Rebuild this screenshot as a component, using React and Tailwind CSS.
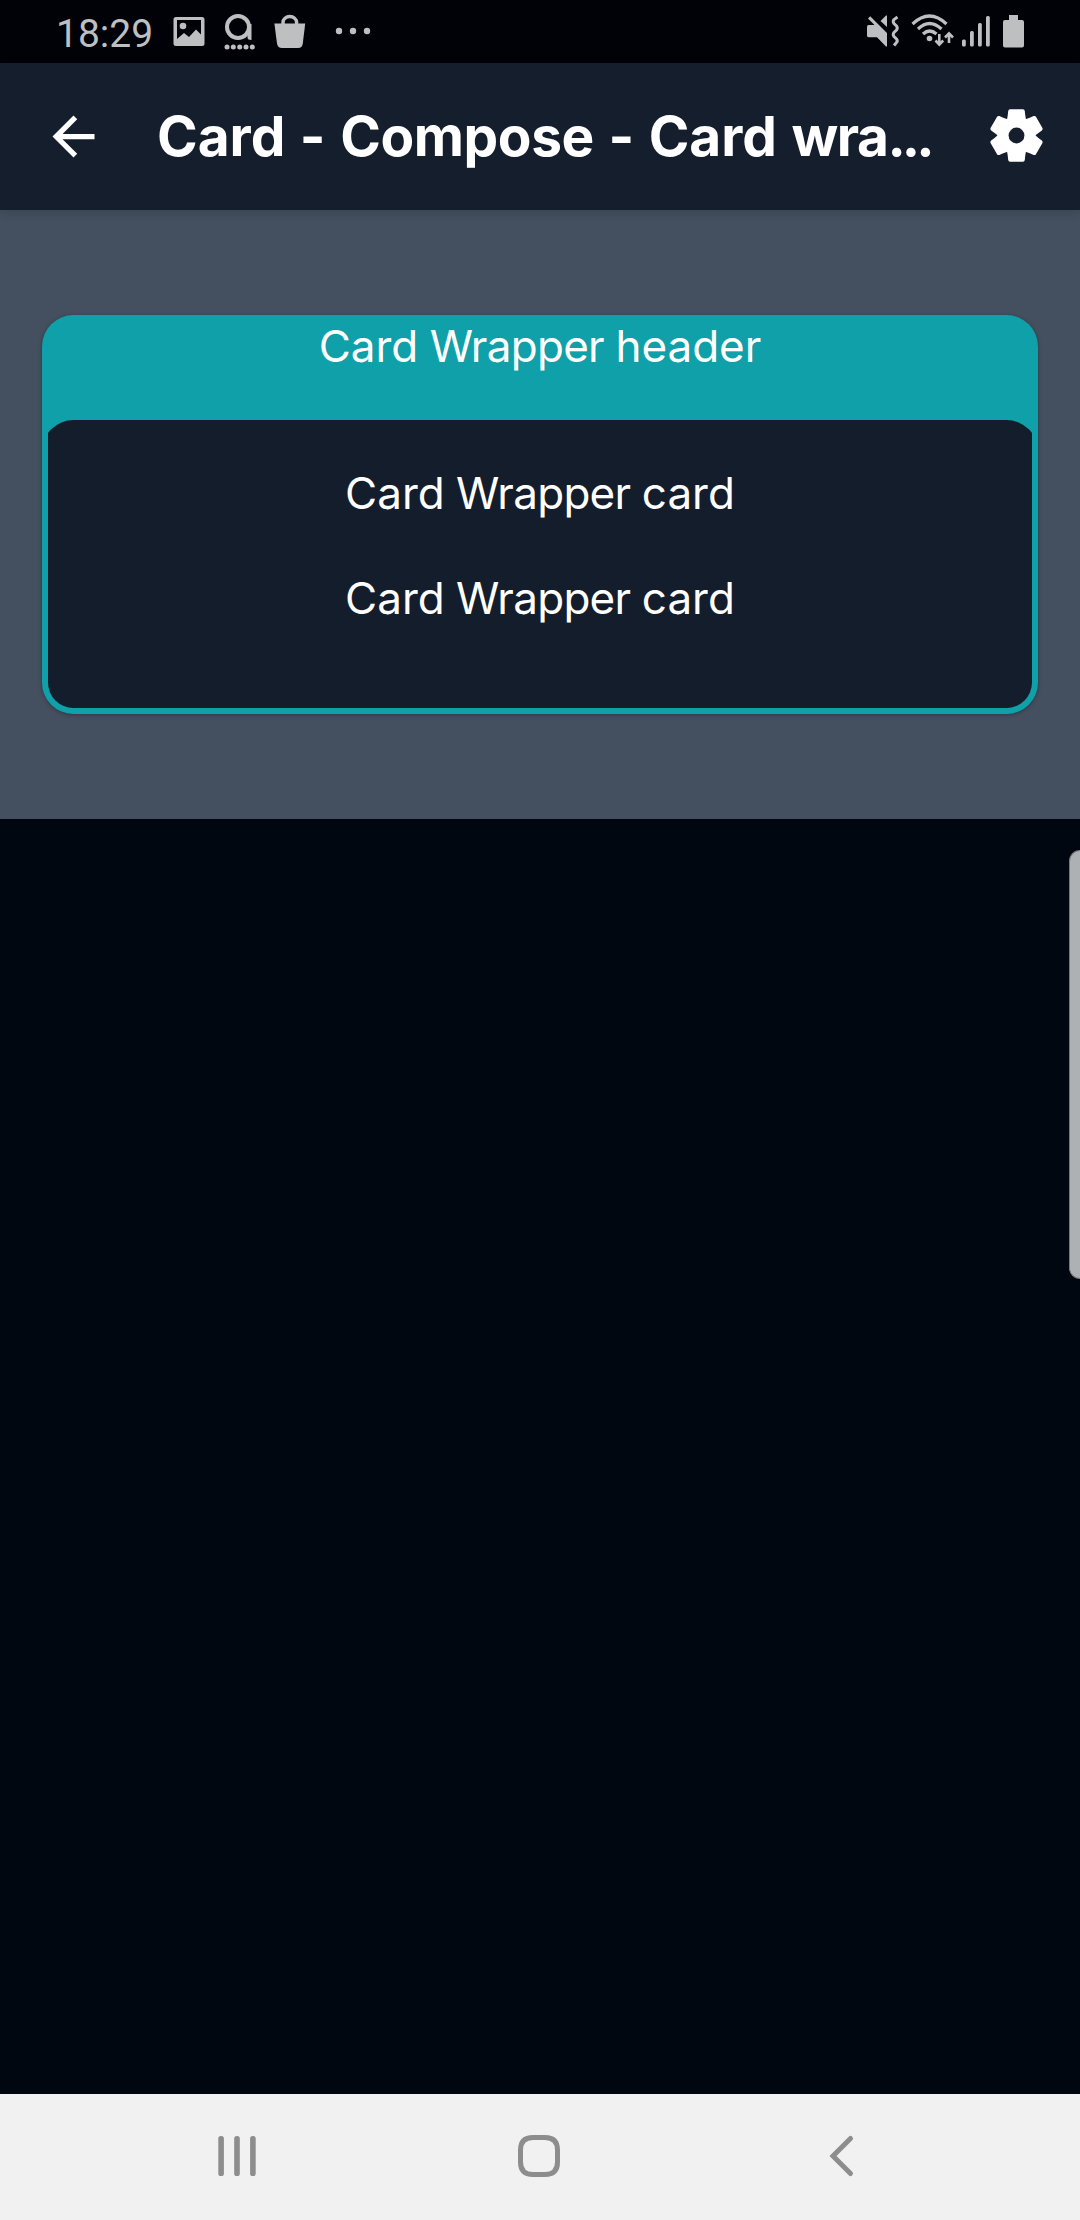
import React from "react";

function StatusBar() {
  return (
    <header className="flex h-[63px] items-start justify-between bg-[#000207] pr-[55px] pl-[56px] text-[#bebfc1]">
      <div className="flex items-start">
        <span className="mt-[4px] w-[117px] font-['Roboto',sans-serif] text-[39px] leading-[60px] whitespace-nowrap">18:29</span>
        <svg className="h-[63px] w-[32px]" viewBox="0 0 32 63" fill="currentColor">
          <path fillRule="evenodd" d="M3 17H29Q31.500 17 31.500 19.500V43.500Q31.500 46 29 46H3Q.5 46 .5 43.500V19.500Q.5 17 3 17ZM4 20V39L11 33L16 37L23 29.500L28 34.500V20Z" />
          <circle cx="10" cy="26" r="3.300" />
        </svg>
        <svg className="ml-[18px] h-[63px] w-[33px]" viewBox="0 0 33 63" fill="currentColor">
          <g fill="none" stroke="currentColor" strokeWidth="4">
            <circle cx="15" cy="27" r="11" />
            <path d="M26.500 24V37.500Q26.500 38 28.500 38" />
          </g>
          <circle cx="4" cy="47" r="2.500" />
          <circle cx="10.300" cy="47" r="2.500" />
          <circle cx="16.700" cy="47" r="2.500" />
          <circle cx="23" cy="47" r="2.500" />
          <circle cx="29.300" cy="47" r="2.500" />
        </svg>
        <svg className="ml-[18px] h-[63px] w-[32px]" viewBox="0 0 32 63" fill="currentColor">
          <path d="M.4 23.500H31.200L28.800 43.500Q28.200 48 24 48H8Q3.800 48 3 43.500Z" />
          <path d="M9 25V22.500a6.800 6 0 0 1 13.600 0V25" fill="none" stroke="currentColor" strokeWidth="3.400" />
        </svg>
        <svg className="ml-[29px] h-[63px] w-[36px]" viewBox="0 0 36 63" fill="currentColor">
          <circle cx="4" cy="31" r="3.200" />
          <circle cx="18" cy="31" r="3.200" />
          <circle cx="32" cy="31" r="3.200" />
        </svg>
      </div>
      <div className="flex">
        <svg className="h-[63px] w-[33px]" viewBox="0 0 33 63" fill="currentColor">
          <path d="M2.500 25H8.500L2 18.500L4.200 16.200L21 33V46.500H20L11 37.300H2.500Q1 37.300 1 35.500V27Q1 25 2.500 25Z" />
          <path d="M20 15.500H21V27L14.500 21Z" />
          <path d="M31.500 17L28 19.500Q26.500 21.500 28 23.500L30.500 26Q32 28 30.500 30L28 32.500Q26.500 34.500 28 36.500L30.500 39Q32 41 30.500 42.500L28 45.500" fill="none" stroke="currentColor" strokeWidth="3" />
        </svg>
        <svg className="ml-[12px] h-[63px] w-[44px]" viewBox="0 0 44 63" fill="none" stroke="currentColor" strokeWidth="3.200">
          <path d="M1.500 24Q18.500 8 35.500 24M7 29Q18.500 18 30.500 29M12 34Q18.500 28 25.500 34" />
          <circle cx="18.500" cy="38.500" r="2.800" fill="currentColor" stroke="none" />
          <g strokeWidth="2.600">
            <path d="M28.300 34V44.500M24.500 40.500L28.300 44.600L32.200 40.500" />
            <path d="M38 43V33.500M34 37.500L38 33.400L42 37.500" />
          </g>
        </svg>
        <svg className="ml-[7px] h-[63px] w-[30px]" viewBox="0 0 30 63" fill="currentColor">
          <rect x="0" y="39.500" width="3.800" height="7" rx="1.500" />
          <rect x="8" y="31" width="3.800" height="15.500" rx="1.500" />
          <rect x="16" y="23" width="3.800" height="23.500" rx="1.500" />
          <rect x="24" y="16" width="3.800" height="30.500" rx="1.500" />
        </svg>
        <svg className="ml-[10px] h-[63px] w-[23px]" viewBox="0 0 23 63" fill="currentColor">
          <path d="M7 15H16V20H20Q22 20 22 22V45.500Q22 47.500 20 47.500H3Q1 47.500 1 45.500V22Q1 20 3 20H7Z" />
        </svg>
      </div>
    </header>
  );
}

const TOOTH = "M-10 -14Q-9 -17 -8.300 -24.500Q-8 -26.200 -6.500 -26.200H6.500Q8 -26.200 8.300 -24.500Q9 -17 10 -14Z";

function GearIcon() {
  return (
    <svg className="mb-[2px] size-[63px] shrink-0" viewBox="-31.5 -31.5 63 63" fill="currentColor">
      <circle r="18.800" />
      {[0, 60, 120, 180, 240, 300].map((angle) => (
        <path key={angle} d={TOOTH} transform={`rotate(${angle})`} />
      ))}
      <circle r="7.900" fill="#151e2c" />
    </svg>
  );
}

function AppBar() {
  return (
    <div className="relative z-10 flex h-[147px] items-center bg-[#151e2c] pr-[32px] pl-[42px] text-white shadow-[0_3px_10px_rgba(0,0,0,0.14)]">
      <svg className="size-[63px] shrink-0" viewBox="0 0 24 24" fill="currentColor">
        <path d="M20 11H7.830l5.590-5.590L12 4l-8 8 8 8 1.410-1.410L7.830 13H20v-2z" />
      </svg>
      <h1 className="mb-[2px] ml-[52px] flex-1 font-['Inter',sans-serif] text-[55px] leading-[64px] font-bold whitespace-nowrap [font-feature-settings:'calt'_0] [word-spacing:1.5px]">
        Card - <span className="tracking-[-0.4px]">Compose</span> - Card <span className="tracking-[-1.5px]">wra</span>
        <span className="tracking-[-4px]">...</span>
      </h1>
      <GearIcon />
    </div>
  );
}

function CardLabel({ last }) {
  return (
    <p className="text-[44px] leading-[62px] [word-spacing:-1px]">
      Card <span className="tracking-[-0.7px]">Wrapper</span> {last}
    </p>
  );
}

function CardWrapper() {
  return (
    <section className="h-[609px] bg-[#44505f] px-[42px] pt-[105px] text-center font-['Inter',sans-serif] text-white">
      <div className="h-[399px] rounded-[31.5px] bg-[#10a0a9] px-[6px] pb-[6px] shadow-[0_1px_4px_rgba(0,0,0,0.3)]">
        <div className="h-[105px]">
          <CardLabel last="header" />
        </div>
        <div className="h-[288px] overflow-hidden rounded-b-[25.5px]">
          <div className="-mx-[6px] flex h-full flex-col gap-[43px] rounded-t-[31.5px] bg-[#141d2b] pt-[42px]">
            <CardLabel last="card" />
            <CardLabel last="card" />
          </div>
        </div>
      </div>
    </section>
  );
}

function NavBar() {
  return (
    <nav className="flex h-[126px] items-center justify-between bg-[#f1f1f1] px-[216px] pb-[2px] text-[#8d8d8d]">
      <svg className="h-[44px] w-[42px]" viewBox="0 0 42 44" fill="currentColor">
        <rect x="2.300" y="2" width="5.600" height="40" rx="2.600" />
        <rect x="18.200" y="2" width="5.600" height="40" rx="2.600" />
        <rect x="34.100" y="2" width="5.600" height="40" rx="2.600" />
      </svg>
      <svg className="h-[44px] w-[44px]" viewBox="0 0 44 44" fill="none" stroke="currentColor" strokeWidth="5">
        <path d="M15 3.500H27Q39.500 3.500 39.500 16V28Q39.500 40.500 27 40.500H15Q2.500 40.500 2.500 28V16Q2.500 3.500 15 3.500Z" />
      </svg>
      <svg className="h-[44px] w-[42px]" viewBox="0 0 42 44" fill="none" stroke="currentColor" strokeWidth="5" strokeLinecap="round">
        <path d="M28.500 4.500L11 22L28.500 39.500" />
      </svg>
    </nav>
  );
}

export default function App() {
  return (
    <div className="flex h-[2220px] w-[1080px] flex-col overflow-hidden bg-[#000710]">
      <StatusBar />
      <AppBar />
      <CardWrapper />
      <main className="flex flex-1 justify-end pt-[31px]">
        <div className="h-[429px] w-[11px] rounded-l-[16px] border-y border-l border-[#77797c] bg-[#aeb1b4]" />
      </main>
      <NavBar />
    </div>
  );
}
